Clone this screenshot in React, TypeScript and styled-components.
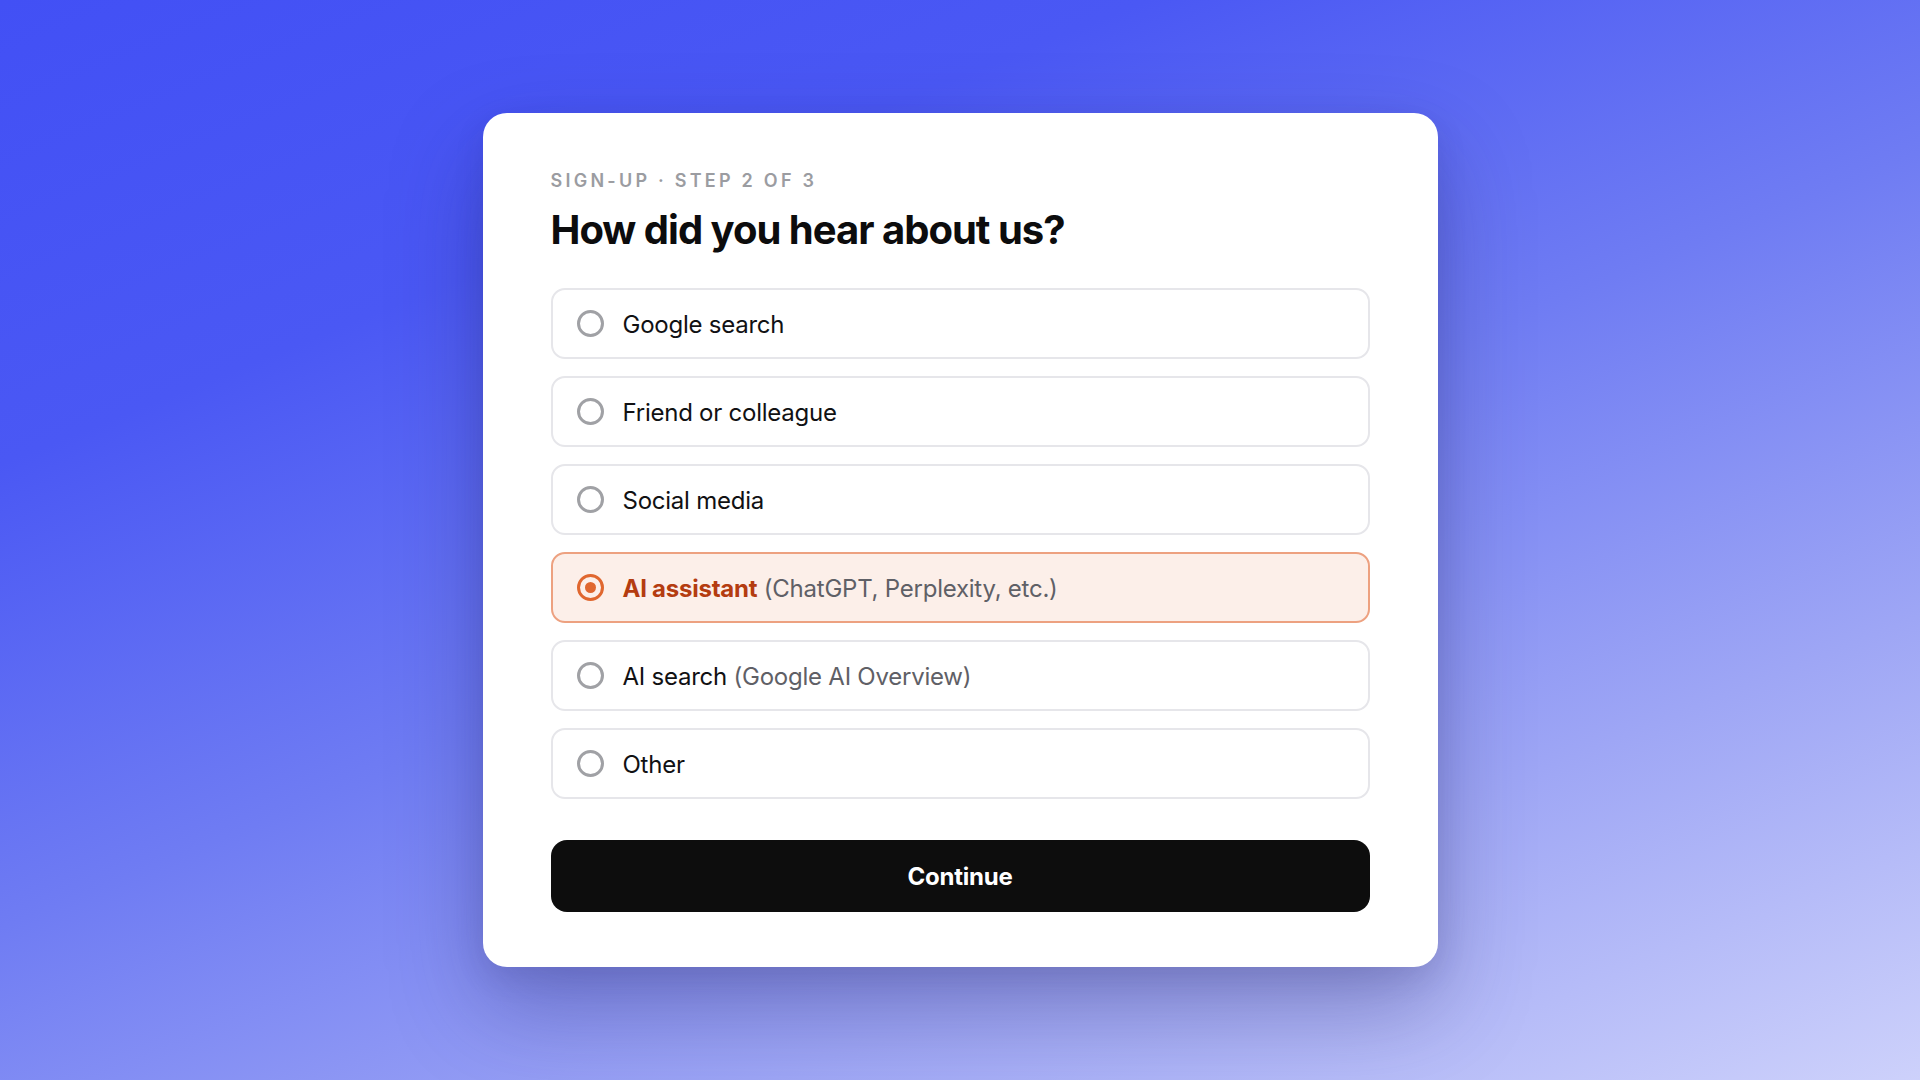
import styled, { createGlobalStyle } from "styled-components";
import { useState } from "react";

interface Option {
    id: string;
    label: string;
    hint?: string;
}

const options: Option[] = [
    { id: "google", label: "Google search" },
    { id: "friend", label: "Friend or colleague" },
    { id: "social", label: "Social media" },
    { id: "assistant", label: "AI assistant", hint: "(ChatGPT, Perplexity, etc.)" },
    { id: "aisearch", label: "AI search", hint: "(Google AI Overview)" },
    { id: "other", label: "Other" },
];

const GlobalStyle = createGlobalStyle`
    * {
        box-sizing: border-box;
    }
    html, body {
        margin: 0;
        padding: 0;
    }
    body {
        font-family: Inter, "Noto Sans", "Liberation Sans", sans-serif;
        -webkit-font-smoothing: antialiased;
    }
`;

const App = () => {
    const [selected, setSelected] = useState<string>("assistant");

    return (
        <Page>
            <GlobalStyle />
            <Card>
                <Eyebrow>Sign-up · Step 2 of 3</Eyebrow>
                <Title>How did you hear about us?</Title>
                <List>
                    {options.map((o) => (
                        <Row
                            key={o.id}
                            $active={selected === o.id}
                            onClick={() => setSelected(o.id)}
                        >
                            <Radio $active={selected === o.id} />
                            <Label $active={selected === o.id}>
                                {o.label}
                                {o.hint && <Hint> {o.hint}</Hint>}
                            </Label>
                        </Row>
                    ))}
                </List>
                <Button>Continue</Button>
            </Card>
        </Page>
    );
};

const Page = styled.div`
    width: 1920px;
    height: 1080px;
    display: flex;
    justify-content: center;
    align-items: flex-start;
    padding-top: 113px;
    background: linear-gradient(
        158deg,
        #4250f5 0%,
        #4a58f4 25%,
        #6f7cf3 50%,
        #9ea6f5 75%,
        #cdd1fb 100%
    );
    overflow: hidden;
`;

const Card = styled.div`
    width: 955px;
    background: #ffffff;
    border-radius: 24px;
    padding: 57px 68px 55px;
    box-shadow: 0 40px 90px rgba(40, 40, 110, 0.35),
        0 10px 30px rgba(40, 40, 110, 0.12);
    display: flex;
    flex-direction: column;
`;

const Eyebrow = styled.div`
    font-size: 18px;
    font-weight: 600;
    letter-spacing: 0.18em;
    text-transform: uppercase;
    color: #9b9ca1;
    line-height: 22px;
`;

const Title = styled.h1`
    margin: 14px 0 34px;
    font-size: 40px;
    font-weight: 700;
    letter-spacing: -0.025em;
    color: #0c0c0d;
    line-height: 48px;
`;

const List = styled.div`
    display: flex;
    flex-direction: column;
    gap: 17px;
`;

const Row = styled.div<{ $active: boolean }>`
    height: 71px;
    display: flex;
    align-items: center;
    gap: 19px;
    padding: 0 24px;
    border-radius: 14px;
    border: 2px solid ${(p) => (p.$active ? "#eda180" : "#e6e6ea")};
    background: ${(p) => (p.$active ? "#fcefe9" : "#ffffff")};
    cursor: pointer;
`;

const Radio = styled.span<{ $active: boolean }>`
    width: 27px;
    height: 27px;
    flex: none;
    border-radius: 50%;
    border: 3px solid ${(p) => (p.$active ? "#e0672f" : "#a0a1a5")};
    display: flex;
    align-items: center;
    justify-content: center;
    &::after {
        content: "";
        width: 11px;
        height: 11px;
        border-radius: 50%;
        background: #e0672f;
        display: ${(p) => (p.$active ? "block" : "none")};
    }
`;

const Label = styled.span<{ $active: boolean }>`
    padding-top: 2px;
    font-size: 24px;
    letter-spacing: -0.01em;
    font-weight: ${(p) => (p.$active ? 700 : 400)};
    color: ${(p) => (p.$active ? "#b43c10" : "#111113")};
`;

const Hint = styled.span`
    font-weight: 400;
    color: #5f6066;
`;

const Button = styled.button`
    margin-top: 41px;
    height: 72px;
    border: none;
    border-radius: 16px;
    background: #0d0d0d;
    color: #ffffff;
    font-family: Inter, "Liberation Sans", sans-serif;
    font-size: 24px;
    font-weight: 700;
    letter-spacing: -0.01em;
    cursor: pointer;
`;

export default App;
